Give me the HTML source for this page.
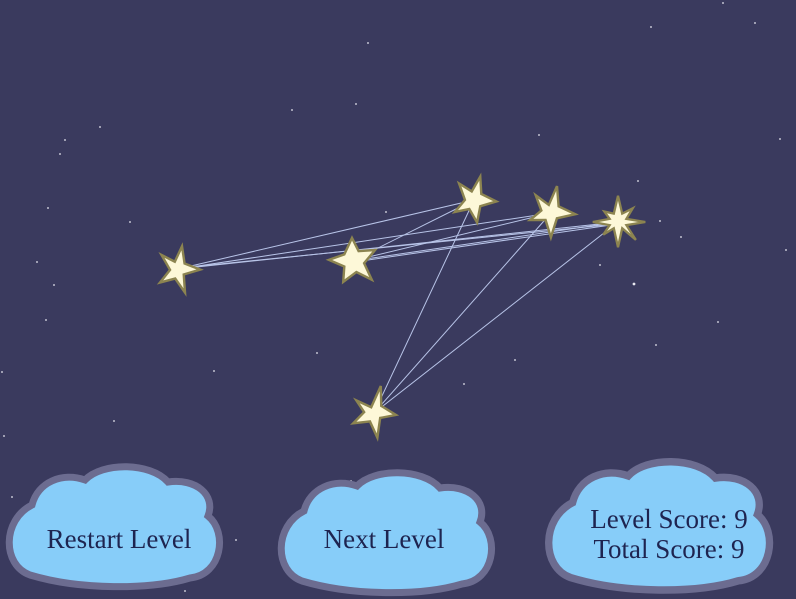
<!DOCTYPE html>
<html><head><meta charset="utf-8"><style>
html,body{margin:0;padding:0;background:#3a3a5e;width:796px;height:599px;overflow:hidden}
svg{display:block}
text{font-family:"Liberation Serif",serif;fill:#1e2450}
</style></head><body>
<svg width="796" height="599" viewBox="0 0 796 599">
<defs>
<path id="cl" d="M30,575 C2,565 2,520 32,505 C38,482 62,472 85,480 C102,462 150,462 168,482 C196,478 216,495 208,516 C228,532 222,575 190,578 C150,590 80,590 30,575 Z"/>
</defs>
<rect width="796" height="599" fill="#3a3a5e"/>
<g fill="#e8e8f0">
<circle cx="723" cy="3" r="0.9"/><circle cx="755" cy="23" r="0.9"/><circle cx="651" cy="27" r="0.9"/><circle cx="368" cy="43" r="0.9"/><circle cx="356" cy="104" r="0.9"/><circle cx="292" cy="110" r="0.9"/><circle cx="100" cy="127" r="0.9"/><circle cx="65" cy="140" r="0.9"/><circle cx="60" cy="154" r="0.9"/><circle cx="539" cy="135" r="0.9"/><circle cx="780" cy="139" r="0.9"/><circle cx="638" cy="181" r="0.9"/><circle cx="48" cy="208" r="0.9"/><circle cx="386" cy="212" r="0.9"/><circle cx="130" cy="222" r="0.9"/><circle cx="660" cy="221" r="0.9"/><circle cx="681" cy="237" r="0.9"/><circle cx="786" cy="250" r="0.9"/><circle cx="37" cy="262" r="0.9"/><circle cx="600" cy="265" r="0.9"/><circle cx="54" cy="285" r="0.9"/><circle cx="634" cy="284" r="1.4"/><circle cx="46" cy="320" r="0.9"/><circle cx="718" cy="322" r="0.9"/><circle cx="656" cy="345" r="0.9"/><circle cx="317" cy="353" r="0.9"/><circle cx="515" cy="360" r="0.9"/><circle cx="214" cy="371" r="0.9"/><circle cx="2" cy="372" r="0.9"/><circle cx="464" cy="384" r="0.9"/><circle cx="114" cy="421" r="0.9"/><circle cx="4" cy="436" r="0.9"/><circle cx="12" cy="497" r="0.9"/><circle cx="236" cy="540" r="0.9"/><circle cx="185" cy="591" r="0.9"/><circle cx="351" cy="481" r="0.9"/><circle cx="480" cy="505" r="0.9"/><circle cx="375" cy="587" r="0.9"/>
</g>
<g stroke="#b8c4e8" stroke-width="1" fill="none">
<line x1="178" y1="269" x2="474" y2="200"/><line x1="178" y1="269" x2="551" y2="213"/><line x1="178" y1="269" x2="618" y2="222"/><line x1="180" y1="268" x2="616" y2="224"/>
<line x1="352" y1="261" x2="474" y2="200"/><line x1="352" y1="261" x2="551" y2="213"/><line x1="352" y1="261" x2="618" y2="222"/><line x1="354" y1="262" x2="618" y2="224"/>
<line x1="374" y1="413" x2="474" y2="200"/><line x1="374" y1="413" x2="551" y2="213"/><line x1="374" y1="413" x2="618" y2="222"/>
</g>
<g fill="#fdf8d8" stroke="#8c8450" stroke-width="2.2" stroke-linejoin="miter">
<path transform="translate(178,269) rotate(10) scale(1.1)" d="M0,-21 L5,-6 L20,-3 L6,4 L10,20 L-1,9 L-14,15 L-7,2 L-17,-10 L-4,-6 Z"/>
<path transform="translate(352,261) scale(1.1)" d="M0,-21 L6,-9 L21,-10 L11,2 L18,17 L4,10 L-8,19 L-7,5 L-21,-1 L-7,-6 Z"/>
<path transform="translate(474,200) rotate(15) scale(1.1)" d="M0,-22 L5,-7 L20,-4 L7,4 L8,19 L-2,9 L-14,15 L-8,2 L-17,-11 L-4,-7 Z"/>
<path transform="translate(551,213) rotate(8) scale(1.1)" d="M2,-25 L6,-7 L22,-2 L6,4 L3,22 L-4,7 L-18,9 L-9,-1 L-16,-14 L-3,-7 Z"/>
<path transform="translate(618,222) scale(1.05)" d="M0,-25 L4,-8 L14,-13 L8,-3 L26,0 L8,3 L17,17 L4,6 L0,24 L-4,6 L-14,12 L-8,3 L-24,0 L-8,-3 L-13,-10 L-4,-8 Z"/>
<path transform="translate(374,413) rotate(5) scale(1.1)" d="M4,-25 L6,-7 L20,0 L6,4 L5,22 L-3,8 L-18,11 L-9,0 L-17,-10 L-3,-5 Z"/>
</g>
<g fill="#87cdf9" stroke="#6c6c90" stroke-width="7">
<use href="#cl"/>
<use href="#cl" transform="translate(272,6)"/>
<use href="#cl" transform="translate(539,462) scale(1.05,1.07) translate(0,-467)"/>
</g>
<text x="119" y="548" font-size="27" text-anchor="middle">Restart Level</text>
<text x="384" y="548" font-size="27" text-anchor="middle">Next Level</text>
<text x="669" y="528" font-size="27" text-anchor="middle">Level Score: 9</text>
<text x="669" y="558" font-size="27" text-anchor="middle">Total Score: 9</text>
</svg>
</body></html>
